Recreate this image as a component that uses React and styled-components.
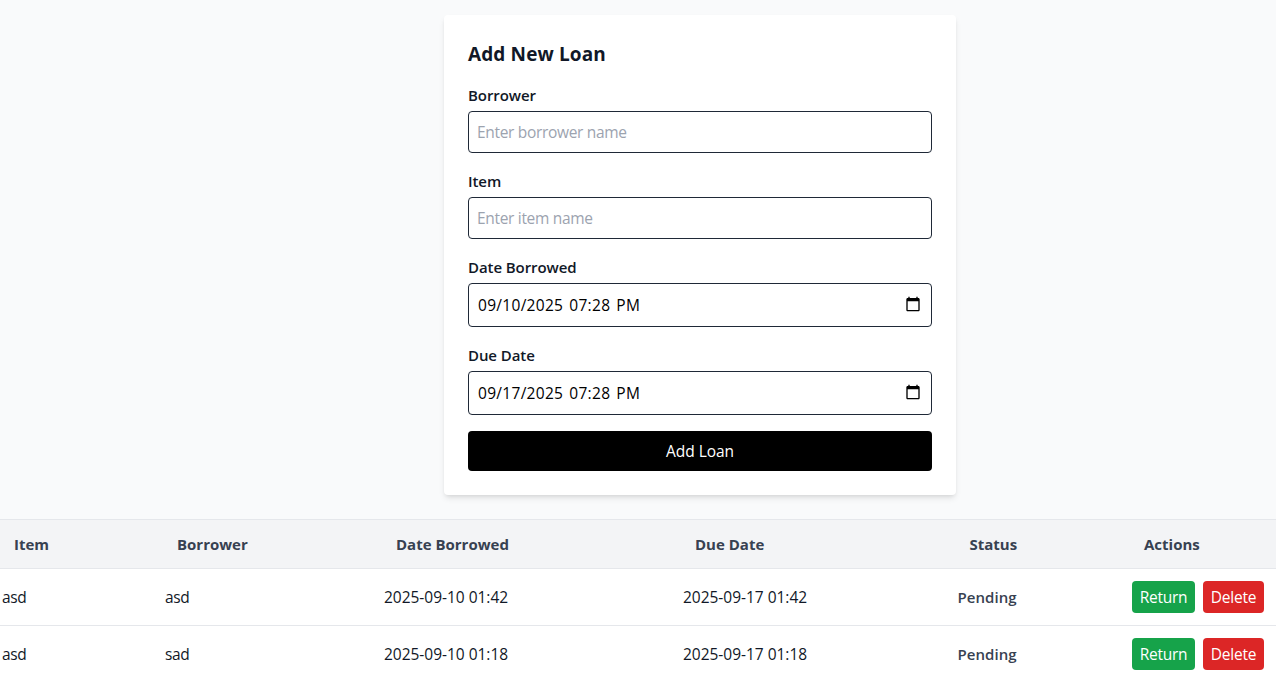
import React, { useState } from "react";
import styled, { createGlobalStyle } from "styled-components";

const GlobalStyle = createGlobalStyle`
  *, *::before, *::after { box-sizing: border-box; }
  body {
    margin: 0;
    overflow: hidden;
    background: #f9fafb;
    color: #111827;
    font: 400 15.5px/24px "Segoe UI", "Open Sans", sans-serif;
  }
`;

const Page = styled.main`
  height: 679px;
  overflow: hidden;
  padding-top: 15px;
`;

const Card = styled.form`
  width: 512px;
  margin: 0 0 24px 444px;
  padding: 24px;
  border-radius: 4px;
  background: #fff;
  box-shadow: 0 4px 6px -1px rgba(0, 0, 0, 0.1), 0 2px 4px -2px rgba(0, 0, 0, 0.1);
`;

const Title = styled.h2`
  margin: 0 0 15px;
  padding-top: 1px;
  font-size: 19px;
  font-weight: 700;
  line-height: 28px;
  letter-spacing: 0.12px;
`;

const Field = styled.div`
  display: flex;
  flex-direction: column;
  gap: 4px;
  margin-bottom: 16px;
`;

const Label = styled.label`
  font-size: 15px;
  font-weight: 600;
  letter-spacing: -0.08px;
`;

const Input = styled.input`
  width: 100%;
  height: 42px;
  padding: 8px;
  border: 1px solid #1f2937;
  border-radius: 4px;
  outline: none;
  background: #fff;
  color: #000;
  font: inherit;
  letter-spacing: -0.32px;
  &::placeholder { color: #9ca3af; opacity: 1; }
`;

const DateBox = styled.div`
  display: flex;
  align-items: center;
  height: 44px;
  padding: 0 10px 2px 9px;
  border: 1px solid #1f2937;
  border-radius: 4px;
  background: #fff;
`;

const DateInput = styled.input`
  flex: 1;
  min-width: 0;
  height: 26px;
  padding: 1px 0 0;
  border: 0;
  outline: none;
  background: transparent;
  color: #000;
  font: inherit;
  letter-spacing: 0.3px;
  word-spacing: 1.7px;
`;

const PickerIcon = styled.svg`
  flex: none;
  width: 16px;
  height: 16px;
`;

const Submit = styled.button`
  display: block;
  width: 100%;
  height: 40px;
  padding: 8px;
  border: 0;
  border-radius: 4px;
  background: #000;
  color: #fff;
  font: inherit;
  letter-spacing: -0.05px;
`;

const Table = styled.section`
  border-top: 1px solid #e5e7eb;
  background: #fff;
`;

const Row = styled.div`
  display: grid;
  grid-template-columns: 163px 219px 299px 274.5px 174.5px 156px;
  align-items: center;
  margin-left: -10px;
  height: 57px;
  border-bottom: 1px solid #e5e7eb;
`;

const HeadRow = styled(Row)`
  height: 49px;
  background: #f3f4f6;
  color: #374151;
`;

const HeadCell = styled.div`
  padding: 0 24px;
  font-size: 15px;
  font-weight: 700;
  letter-spacing: 0;
  white-space: nowrap;
`;

const Cell = styled.div`
  padding: 0 12px;
  letter-spacing: ${(p) => (p.$date ? "-0.02px" : "-0.4px")};
  white-space: nowrap;
`;

const Status = styled(Cell)`
  color: #374151;
  font-size: 15px;
  font-weight: 600;
  letter-spacing: 0.05px;
`;

const Actions = styled(Cell)`
  display: flex;
  gap: 8px;
`;

const ActionButton = styled.button`
  width: ${(p) => (p.$danger ? 61 : 63)}px;
  height: 32px;
  padding: 4px 0;
  border: 0;
  border-radius: 4px;
  background: ${(p) => (p.$danger ? "#dc2626" : "#16a34a")};
  color: #fff;
  font: inherit;
  letter-spacing: -0.25px;
`;

const headings = ["Item", "Borrower", "Date Borrowed", "Due Date", "Status", "Actions"];
const loans = [
  { item: "asd", borrower: "asd", borrowed: "2025-09-10 01:42", due: "2025-09-17 01:42" },
  { item: "asd", borrower: "sad", borrowed: "2025-09-10 01:18", due: "2025-09-17 01:18" },
];

function DateField({ id, label, initial }) {
  const [value, setValue] = useState(initial);
  return (
    <Field>
      <Label htmlFor={id}>{label}</Label>
      <DateBox>
        <DateInput id={id} value={value} onChange={(e) => setValue(e.target.value)} />
        <PickerIcon viewBox="0 0 24 24" aria-hidden="true">
          <path d="M20 3h-1V1h-2v2H7V1H5v2H4c-1.1 0-2 .9-2 2v16c0 1.1.9 2 2 2h16c1.1 0 2-.9 2-2V5c0-1.1-.9-2-2-2zm0 18H4V8h16v13z" />
        </PickerIcon>
      </DateBox>
    </Field>
  );
}

export default function App() {
  return (
    <>
      <GlobalStyle />
      <Page>
        <Card onSubmit={(e) => e.preventDefault()}>
          <Title>Add New Loan</Title>
          <Field>
            <Label htmlFor="borrower">Borrower</Label>
            <Input id="borrower" type="text" placeholder="Enter borrower name" />
          </Field>
          <Field>
            <Label htmlFor="item">Item</Label>
            <Input id="item" type="text" placeholder="Enter item name" />
          </Field>
          <DateField id="borrowed" label="Date Borrowed" initial="09/10/2025 07:28 PM" />
          <DateField id="due" label="Due Date" initial="09/17/2025 07:28 PM" />
          <Submit type="submit">Add Loan</Submit>
        </Card>
        <Table>
          <HeadRow>
            {headings.map((h) => <HeadCell key={h}>{h}</HeadCell>)}
          </HeadRow>
          {loans.map((loan) => (
            <Row key={loan.borrowed}>
              <Cell>{loan.item}</Cell>
              <Cell>{loan.borrower}</Cell>
              <Cell $date>{loan.borrowed}</Cell>
              <Cell $date>{loan.due}</Cell>
              <Status>Pending</Status>
              <Actions>
                <ActionButton>Return</ActionButton>
                <ActionButton $danger>Delete</ActionButton>
              </Actions>
            </Row>
          ))}
        </Table>
      </Page>
    </>
  );
}
